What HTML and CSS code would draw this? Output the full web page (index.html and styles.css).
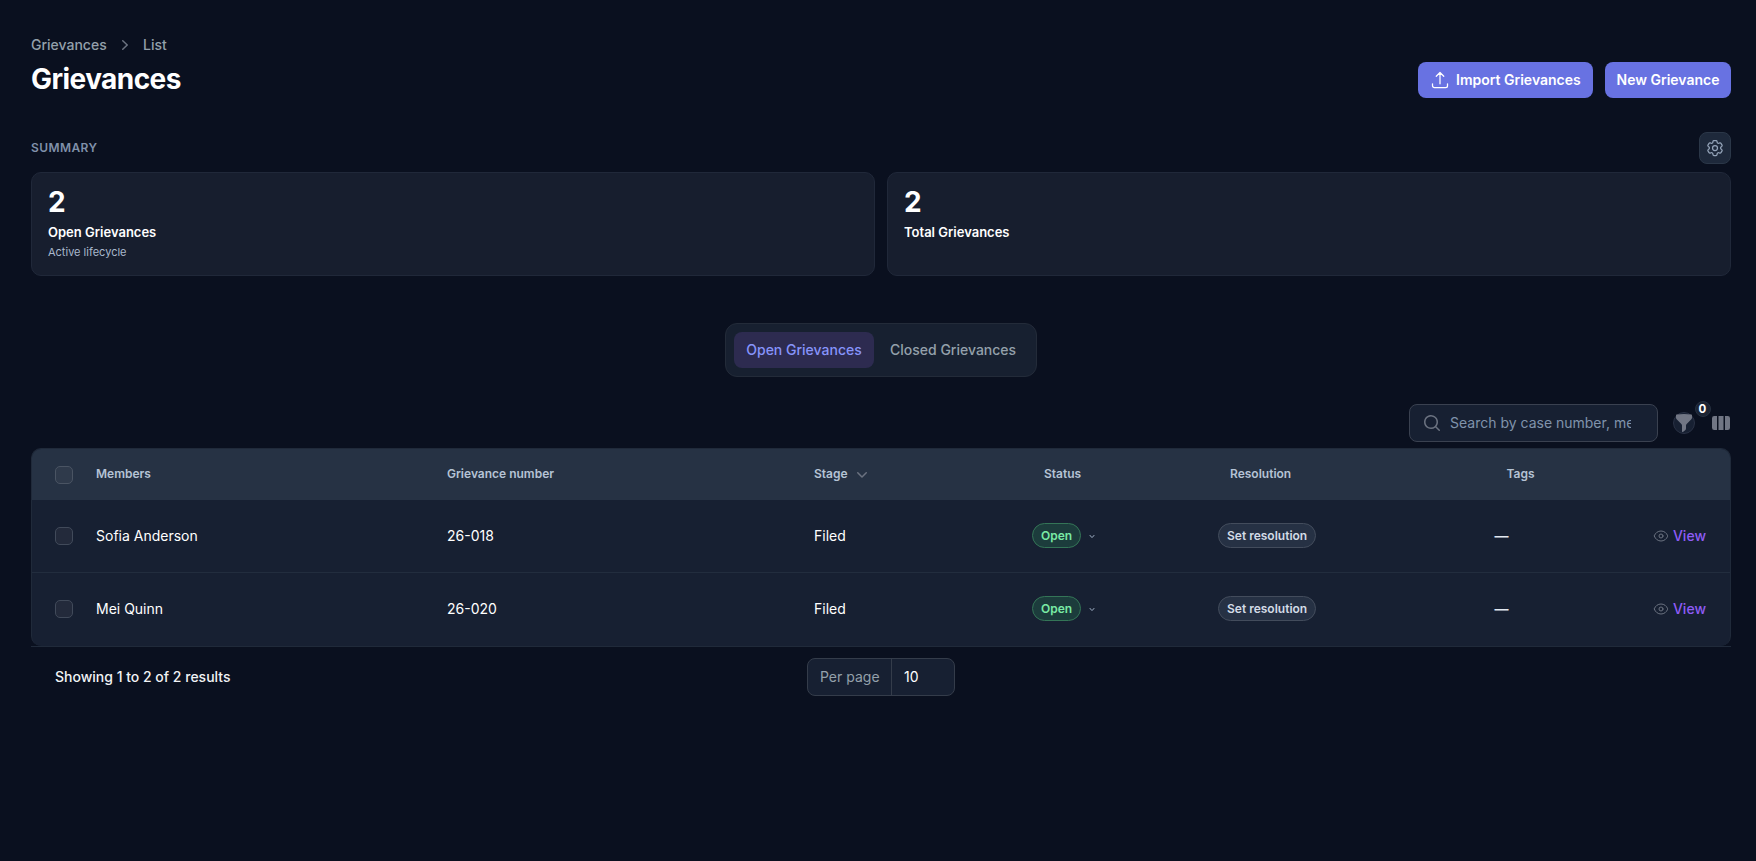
FILE: index.html
```html
<!DOCTYPE html>
<html lang="en">
<head>
<meta charset="utf-8">
<title>Grievances</title>
<link rel="stylesheet" href="styles.css">
</head>
<body>
<svg class="sprite" aria-hidden="true">
  <symbol id="eye" viewBox="0 0 24 24" fill="none" stroke="currentColor" stroke-width="1.5" stroke-linecap="round" stroke-linejoin="round"><path d="M2.036 12.322a1.012 1.012 0 0 1 0-.639C3.423 7.51 7.36 4.5 12 4.5c4.638 0 8.573 3.007 9.963 7.178.07.207.07.431 0 .639C20.577 16.49 16.64 19.5 12 19.5c-4.638 0-8.573-3.007-9.963-7.178Z"/><path d="M15 12a3 3 0 1 1-6 0 3 3 0 0 1 6 0Z"/></symbol>
  <symbol id="chevron-down" viewBox="0 0 20 20" fill="currentColor"><path fill-rule="evenodd" d="M5.22 8.22a.75.75 0 0 1 1.06 0L10 11.94l3.72-3.72a.75.75 0 1 1 1.06 1.06l-4.25 4.25a.75.75 0 0 1-1.06 0L5.22 9.28a.75.75 0 0 1 0-1.06Z"/></symbol>
</svg>
<main class="page">
  <header class="header">
    <div class="heading">
      <nav class="crumbs">
        <span>Grievances</span>
        <svg class="icon-20" viewBox="0 0 20 20" fill="currentColor"><path fill-rule="evenodd" d="M7.21 14.77a.75.75 0 0 1 .02-1.06L11.168 10 7.23 6.29a.75.75 0 1 1 1.04-1.08l4.5 4.25a.75.75 0 0 1 0 1.08l-4.5 4.25a.75.75 0 0 1-1.06-.02Z"/></svg>
        <span>List</span>
      </nav>
      <h1 class="title">Grievances</h1>
    </div>
    <div class="actions">
      <button class="btn btn-import"><svg class="icon-20" viewBox="0 0 24 24" fill="none" stroke="currentColor" stroke-width="1.5" stroke-linecap="round" stroke-linejoin="round"><path d="M3 16.5v2.25A2.25 2.25 0 0 0 5.25 21h13.5A2.25 2.25 0 0 0 21 18.75V16.5m-13.5-9L12 3m0 0 4.5 4.5M12 3v13.5"/></svg>Import Grievances</button>
      <button class="btn">New Grievance</button>
    </div>
  </header>

  <section class="summary">
    <div class="summary-head">
      <h2 class="summary-title">SUMMARY</h2>
      <button class="gear"><svg class="icon-20" viewBox="0 0 24 24" fill="none" stroke="currentColor" stroke-width="1.5" stroke-linecap="round" stroke-linejoin="round"><path d="M9.594 3.94c.09-.542.56-.94 1.11-.94h2.593c.55 0 1.02.398 1.11.94l.213 1.281c.063.374.313.686.645.87.074.04.147.083.22.127.325.196.72.257 1.075.124l1.217-.456a1.125 1.125 0 0 1 1.37.49l1.296 2.247a1.125 1.125 0 0 1-.26 1.431l-1.003.827c-.293.241-.438.613-.43.992a7.723 7.723 0 0 1 0 .255c-.008.378.137.75.43.991l1.004.827c.424.35.534.955.26 1.43l-1.298 2.247a1.125 1.125 0 0 1-1.369.491l-1.217-.456c-.355-.133-.75-.072-1.076.124a6.47 6.47 0 0 1-.22.128c-.331.183-.581.495-.644.869l-.213 1.281c-.09.543-.56.94-1.11.94h-2.594c-.55 0-1.019-.398-1.11-.94l-.213-1.281c-.062-.374-.312-.686-.644-.87a6.52 6.52 0 0 1-.22-.127c-.325-.196-.72-.257-1.076-.124l-1.217.456a1.125 1.125 0 0 1-1.369-.49l-1.297-2.247a1.125 1.125 0 0 1 .26-1.431l1.004-.827c.292-.24.437-.613.43-.991a6.932 6.932 0 0 1 0-.255c.007-.38-.138-.751-.43-.992l-1.004-.827a1.125 1.125 0 0 1-.26-1.43l1.297-2.247a1.125 1.125 0 0 1 1.37-.491l1.216.456c.356.133.751.072 1.076-.124.072-.044.146-.086.22-.128.332-.183.582-.495.644-.869l.214-1.28Z"/><path d="M15 12a3 3 0 1 1-6 0 3 3 0 0 1 6 0Z"/></svg></button>
    </div>
    <div class="cards">
      <article class="card"><div class="card-value">2</div><div class="card-label">Open Grievances</div><div class="card-note">Active lifecycle</div></article>
      <article class="card"><div class="card-value">2</div><div class="card-label">Total Grievances</div></article>
    </div>
  </section>

  <nav class="tabs">
    <a class="tab tab-active">Open Grievances</a>
    <a class="tab">Closed Grievances</a>
  </nav>

  <section class="listing">
    <div class="toolbar">
      <label class="search">
        <svg class="icon-20" viewBox="0 0 20 20" fill="currentColor"><path fill-rule="evenodd" d="M9 3.5a5.5 5.5 0 1 0 0 11 5.5 5.5 0 0 0 0-11ZM2 9a7 7 0 1 1 12.452 4.391l3.328 3.329a.75.75 0 1 1-1.06 1.06l-3.329-3.328A7 7 0 0 1 2 9Z"/></svg>
        <input class="search-text" type="text" placeholder="Search by case number, me">
      </label>
      <div class="filter">
        <svg class="icon-20" viewBox="0 0 20 20" fill="currentColor"><path fill-rule="evenodd" d="M2.628 1.601C5.028 1.206 7.49 1 10 1s4.973.206 7.372.601a.75.75 0 0 1 .628.74v2.288a2.25 2.25 0 0 1-.659 1.59l-4.682 4.683a2.25 2.25 0 0 0-.659 1.59v3.037c0 .684-.31 1.33-.844 1.757l-1.937 1.55A.75.75 0 0 1 8 18.25v-5.757a2.25 2.25 0 0 0-.659-1.591L2.659 6.22A2.25 2.25 0 0 1 2 4.629V2.34a.75.75 0 0 1 .628-.74Z"/></svg>
        <span class="filter-count">0</span>
      </div>
      <svg class="icon-20 columns" viewBox="0 0 20 20" fill="currentColor"><path d="M14 17h2.75A2.25 2.25 0 0 0 19 14.75v-9.5A2.25 2.25 0 0 0 16.75 3H14v14ZM12.5 3h-5v14h5V3ZM3.25 3H6v14H3.25A2.25 2.25 0 0 1 1 14.75v-9.5A2.25 2.25 0 0 1 3.25 3Z"/></svg>
    </div>

    <div class="table">
      <div class="row row-head">
        <div class="check"></div>
        <div>Members</div>
        <div>Grievance number</div>
        <div class="sort">Stage<svg class="icon-20"><use href="#chevron-down"/></svg></div>
        <div class="indent">Status</div>
        <div class="indent">Resolution</div>
        <div class="indent">Tags</div>
        <div></div>
      </div>
      <div class="row">
        <div class="check"></div>
        <div>Sofia Anderson</div>
        <div>26-018</div>
        <div>Filed</div>
        <div class="status"><span class="badge badge-open">Open</span><svg class="icon-10"><use href="#chevron-down"/></svg></div>
        <div class="status"><span class="badge">Set resolution</span></div>
        <div class="dash">—</div>
        <a class="view"><svg class="icon-16"><use href="#eye"/></svg>View</a>
      </div>
      <div class="row">
        <div class="check"></div>
        <div>Mei Quinn</div>
        <div>26-020</div>
        <div>Filed</div>
        <div class="status"><span class="badge badge-open">Open</span><svg class="icon-10"><use href="#chevron-down"/></svg></div>
        <div class="status"><span class="badge">Set resolution</span></div>
        <div class="dash">—</div>
        <a class="view"><svg class="icon-16"><use href="#eye"/></svg>View</a>
      </div>
    </div>

    <footer class="footer">
      <div class="results">Showing 1 to 2 of 2 results</div>
      <div class="per-page"><span class="per-label">Per page</span><span class="per-value">10</span></div>
    </footer>
  </section>
</main>
</body>
</html>
```
FILE: styles.css
```css
* { box-sizing: border-box; }
body {
  margin: 0;
  min-height: 861px;
  background: #0a101f;
  color: #fff;
  font: 14px/20px Inter, sans-serif;
}
h1, h2 { margin: 0; }
button { font: inherit; border: 0; padding: 0; }
.sprite { display: none; }
svg { flex: none; display: block; }
.icon-20 { width: 20px; height: 20px; }
.icon-16 { width: 16px; height: 16px; }
.icon-10 { width: 10px; height: 10px; }

.page { padding: 35px 25px 0 31px; }
.header { display: flex; justify-content: space-between; align-items: flex-end; height: 63px; }
.heading { align-self: flex-start; }
.crumbs { display: flex; gap: 8px; color: #94a0ab; font-weight: 500; }
.crumbs svg { margin-left: 0.4px; color: #6b7280; }
.title { margin-top: 6px; font-size: 28px; line-height: 37px; font-weight: 700; letter-spacing: -0.56px; }
.actions { display: flex; gap: 12px; }
.btn {
  display: flex; align-items: center; gap: 6px;
  height: 36px; padding: 0 11.5px;
  border-radius: 8px; background: #6872e2;
  color: #fff; font-weight: 600;
}
.btn-import { padding: 0 12.3px 0 12px; }

.summary { margin-top: 34px; }
.summary-head { display: flex; justify-content: space-between; align-items: center; }
.summary-title { font-size: 12px; line-height: 16px; font-weight: 600; letter-spacing: 0.42px; color: #8091aa; }
.gear {
  display: grid; place-items: center; width: 32px; height: 32px;
  border: 1px solid #2b3748; border-radius: 8px; background: #1e293b; color: #94a3b8;
}
.cards { display: grid; grid-template-columns: 1fr 1fr; gap: 12px; margin-top: 8px; }
.card { height: 104px; padding: 15px 16px; border: 1px solid #202839; border-radius: 10px; background: #171e2e; }
.card-value { font-size: 28px; line-height: 28px; font-weight: 700; letter-spacing: -0.56px; }
.card-label { margin-top: 6px; font-size: 13px; line-height: 20px; font-weight: 600; }
.card-note { margin-top: 1px; font-size: 11px; line-height: 18px; color: #a9b8cc; }

.tabs {
  display: flex; gap: 4px; width: 312px; height: 54px; margin: 47px auto 0; padding: 8px;
  border: 1px solid #232b39; border-radius: 12px; background: #172030;
}
.tab { display: flex; align-items: center; height: 36px; padding: 0 12px; border-radius: 8px; color: #94a0ab; font-weight: 500; white-space: nowrap; }
.tab-active { flex: none; width: 140px; padding: 0; justify-content: center; background: #2d2b50; color: #8794fb; }

.toolbar { display: flex; align-items: center; justify-content: flex-end; height: 38px; margin-top: 27px; }
.search {
  display: flex; align-items: center; gap: 8px; width: 249px; height: 38px; padding: 0 26px 0 12px;
  border: 1px solid #3a4150; border-radius: 8px; background: #172032; color: #6b7280;
}
.search-text {
  flex: 1; min-width: 0; padding: 0; border: 0; outline: 0; background: none;
  color: #fff; font: inherit;
}
.search-text::placeholder { color: #8093ab; opacity: 1; }
.filter {
  position: relative; display: grid; place-items: center; width: 22px; height: 22px;
  margin: 0 16px 0 15px; border: 1px solid #293144; border-radius: 50%; background: #172032; color: #717684;
}
.filter-count {
  position: absolute; left: 20.5px; top: -12px; width: 16px; height: 16px; border: 1px solid #263040;
  border-radius: 8px; background: #1c2433; color: #fff;
  font-size: 11.5px; line-height: 14px; font-weight: 700; text-align: center;
}
.columns { color: #717684; }

.table { margin-top: 6px; border: 1px solid #202a3a; border-bottom: 0; border-radius: 10px; background: #172032; overflow: hidden; }
.row {
  display: grid; align-items: center; height: 73px; padding: 0 24px 0 23px;
  grid-template-columns: 41px 351px 367px 218px 186px 276.5px 1fr auto;
  border-bottom: 1px solid #222d3e;
}
.row:last-child { padding-bottom: 1px; border-bottom: 0; }
.row-head { height: 51px; background: #263244; border: 0; color: #b5c3d5; font-size: 12px; font-weight: 600; }
.row-head > div:not(.check) { margin-bottom: 2px; }
.check { width: 18px; height: 18px; border: 1px solid #414a5a; border-radius: 5px; background: #232a3b; }
.row-head .check { background: #2f3a4b; border-color: #4a5463; }
.sort { display: flex; align-items: center; gap: 4px; }
.sort svg { margin-top: 1px; color: #6b7280; }
.indent { padding-left: 12px; }
.status { display: flex; align-items: center; gap: 5.5px; margin-bottom: 1px; color: #94a3b8; }
.badge {
  display: inline-flex; align-items: center; height: 25px; padding: 0 8.2px 0 8px;
  border: 1px solid #434c5c; border-radius: 13px; background: #263144;
  color: #d3dbe6; font-size: 12px; line-height: 16px; font-weight: 600;
}
.badge-open { padding: 0 8px; border-color: #347557; background: #1c3c3c; color: #79eaa5; }
.dash { font-weight: 600; color: #e2e8f0; }
.view { display: flex; align-items: center; gap: 4px; color: #8f5cf6; font-weight: 500; }
.view svg { color: #6b7280; }

.footer { display: grid; grid-template-columns: 1fr auto 1fr; align-items: center; height: 61px; padding: 0 24px; border-top: 1px solid #202a3a; }
.results { font-weight: 500; color: #f1f3f5; }
.per-page { display: flex; width: 148px; height: 38px; border: 1px solid #343c4a; border-radius: 8px; background: #172032; line-height: 36px; }
.per-label { width: 84px; padding-left: 12px; border-right: 1px solid #343c4a; color: #94a0ab; }
.per-value { padding-left: 12px; }
```
